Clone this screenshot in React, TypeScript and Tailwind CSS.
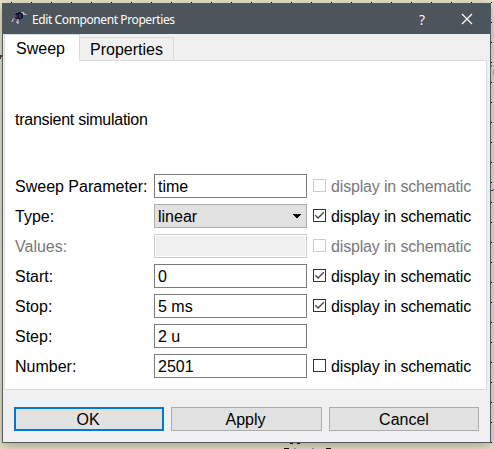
import React from 'react';

type Row = { label: string; value: string; kind?: 'select' | 'disabled'; check?: 'on' | 'off' | 'disabled' };

const rows: Row[] = [
  { label: 'Sweep Parameter:', value: 'time', check: 'disabled' },
  { label: 'Type:', value: 'linear', kind: 'select', check: 'on' },
  { label: 'Values:', value: '', kind: 'disabled', check: 'disabled' },
  { label: 'Start:', value: '0', check: 'on' },
  { label: 'Stop:', value: '5 ms', check: 'on' },
  { label: 'Step:', value: '2 u' },
  { label: 'Number:', value: '2501', check: 'off' },
];

const fieldStyles = {
  text: 'border-[#7a7a7a] bg-white',
  select: 'border-[#adadad] bg-[#e1e1e1]',
  disabled: 'border-[#cccccc] bg-[#f0f0f0] shadow-[inset_0_0_0_1px_white]',
};

// Schematic grid and the fragments of drawing that show around the dialog
function Canvas() {
  const steps = Array.from({ length: 25 }, (_, i) => i * 20);
  return (
    <svg className="absolute inset-0" width="494" height="449" shapeRendering="crispEdges">
      {steps.map((s) => (
        <rect key={`t${s}`} x={11 + s} y="2" width="1" height="1" fill="#000" />
      ))}
      {steps.slice(0, 23).map((s) => (
        <rect key={`r${s}`} x="491" y={2 + s} width="1" height="1" fill="#000" />
      ))}
      <path d="M0 55h2v2h-1v2h-1z" fill="#503028" />
      <path d="M491 65h1v2h-1z" fill="#c65016" />
      <path d="M493 70h1v5h-1z" fill="#6ba8a6" />
      <path d="M491 190h2v1h-2zM493 189h1v1h-1z" fill="#18466a" />
      <path d="M290 443h3v1h-3zM297 443h3v1h-3zM284 448h5v1h-5zM326 448h5v1h-5z" fill="#111" />
      <path d="M294 448h2v1h-2zM312 448h2v1h-2z" fill="#4a9edb" />
    </svg>
  );
}

function Logo() {
  return (
    <svg className="ml-[8px] mt-[6px] shrink-0" width="16" height="16" viewBox="0 0 16 16" shapeRendering="crispEdges">
      <path d="M5 2h5v1h1v1h1v4h-1v1H9v1H6V9H5V8H4V4h1z" fill="#14162b" />
      <path d="M3 5h2v2H3zM5 2h2v1H5z" fill="#57506f" />
      <path d="M5 5h2v3H5z" fill="#551d3c" />
      <path d="M8 4h2v4H8z" fill="#23386e" />
      <path d="M2 8h2v1H2zM1 9h2v2H1zM0 11h2v1H0z" fill="#8580a4" />
      <path d="M10 2h3v1h-3zM12 3h2v2h-2zM14 4h2v1h-2z" fill="#aaa5c0" />
      <path d="M6 9h2v5H6zM5 11h1v2H5z" fill="#9390b6" />
      <path d="M6 12h1v1H6zM12 3h1v1h-1zM1 10h1v1H1z" fill="#deddea" />
    </svg>
  );
}

function TitleBar() {
  return (
    <header className="flex h-[30px] bg-[#4c555b] text-white">
      <Logo />
      <h1 className="ml-[5px] mt-[7px] w-[146px] whitespace-nowrap font-['Noto_Sans','Open_Sans',sans-serif] text-[12px] leading-[18px] tracking-[-0.4px]">
        Edit Component Properties
      </h1>
      <button className="ml-auto mr-[36px] font-['Open_Sans',sans-serif] text-[14px] leading-[29px]" aria-label="Help">?</button>
      <button className="mr-[17px]" aria-label="Close">
        <svg width="12" height="12" viewBox="0 0 12 12">
          <path d="M1 1l10 10M11 1L1 11" stroke="white" strokeWidth="1.2" />
        </svg>
      </button>
    </header>
  );
}

function CheckBox({ state }: { state: 'on' | 'off' | 'disabled' }) {
  const disabled = state === 'disabled';
  return (
    <label className={`ml-[6px] flex h-6 ${disabled ? 'text-[#787878]' : 'text-black'}`}>
      <span className={`mt-[5px] h-[13px] w-[13px] border bg-white ${disabled ? 'border-[#cccccc]' : 'border-[#333333]'}`}>
        {state === 'on' && (
          <svg width="11" height="11" viewBox="0 0 11 11">
            <path d="M1.3 5.2l2.8 2.8L9.8 2.3" fill="none" stroke="#444" strokeWidth="1.3" />
          </svg>
        )}
      </span>
      <span className="ml-[5px] whitespace-nowrap leading-[25px] tracking-[-0.16px]">display in schematic</span>
    </label>
  );
}

function FormRow({ row }: { row: Row }) {
  return (
    <div className="flex h-6">
      <span className={`w-[139px] whitespace-nowrap leading-[25px] ${row.kind === 'disabled' ? 'text-[#787878]' : ''}`}>{row.label}</span>
      <div className={`flex h-6 w-[153px] items-center justify-between border pl-[3px] pr-[5px] ${fieldStyles[row.kind ?? 'text']}`}>
        <span className="leading-[23px]">{row.value}</span>
        {row.kind === 'select' && (
          <svg width="8" height="4" viewBox="0 0 8 4" shapeRendering="crispEdges">
            <path d="M0 0h8v1H7v1H6v1H5v1H3V3H2V2H1V1H0z" />
          </svg>
        )}
      </div>
      {row.check && <CheckBox state={row.check} />}
    </div>
  );
}

export default function App() {
  return (
    <div className="relative h-[449px] w-[494px] overflow-hidden bg-[#e8e2c9] pl-[2px] pt-[3px] font-['Liberation_Sans',Arial,sans-serif] text-[16px] text-black">
      <main className="flex h-[440px] w-[489px] flex-col border border-[#4f5b64] bg-[#f0f0f0] shadow-[0_3px_12px_rgba(0,0,0,0.3)]">
        <TitleBar />
        <nav className="flex h-[26px] items-end pl-px">
          <div className="z-10 mb-[-1px] h-[27px] w-[76px] border border-b-0 border-[#d9d9d9] bg-white pl-[11px] leading-[27px]">Sweep</div>
          <div className="h-[23px] w-[94px] border border-b-0 border-l-0 border-[#d9d9d9] pl-[10px] leading-[23px]">Properties</div>
        </nav>
        <section className="ml-px h-[330px] w-[483px] border border-[#dcdcdc] bg-white pl-[10px] pt-[47px]">
          <p className="leading-[23px] tracking-[-0.26px]">transient simulation</p>
          <div className="mt-[43px] flex flex-col gap-[6px]">
            {rows.map((row) => (
              <FormRow key={row.label} row={row} />
            ))}
          </div>
        </section>
        <footer className="ml-[11px] mt-[17px] flex gap-[7px] leading-[24px]">
          <button className="h-6 w-[150px] border-2 border-[#0078d7] bg-[#e1e1e1] pr-[2px] leading-[21px]">OK</button>
          <button className="h-6 w-[151px] border border-[#adadad] bg-[#e1e1e1] pr-[2px] leading-[23px]">Apply</button>
          <button className="h-6 w-[150px] border border-[#adadad] bg-[#e1e1e1] leading-[23px]">Cancel</button>
        </footer>
      </main>
      <Canvas />
    </div>
  );
}
